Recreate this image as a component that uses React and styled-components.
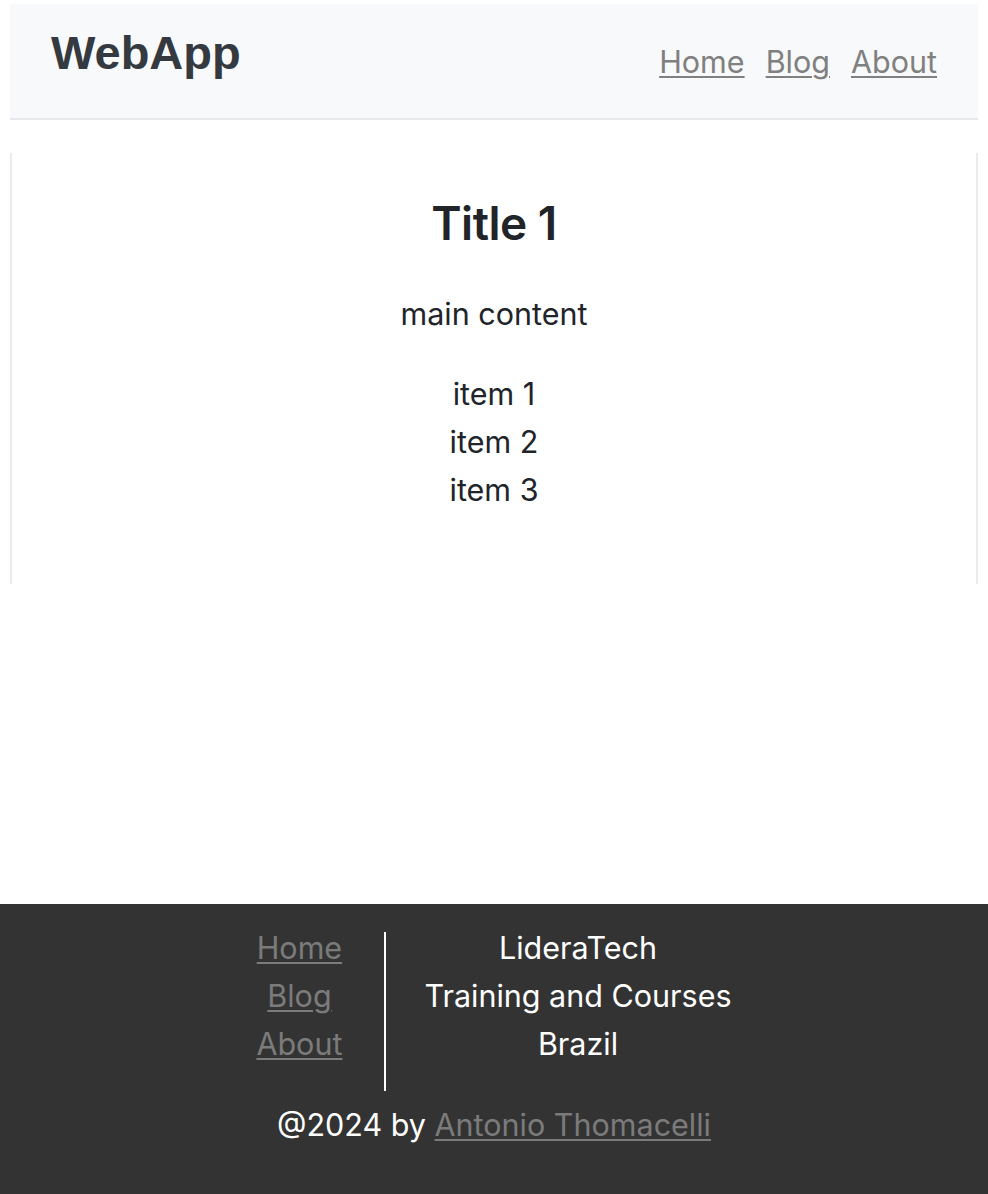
import React from "react";
import styled, { createGlobalStyle } from "styled-components";

const Global = createGlobalStyle`
  html, body { margin: 0; padding: 0; background: #ffffff; }
  body { font-family: Inter, "Noto Sans", sans-serif; color: #212529; }
  * { box-sizing: border-box; }
`;

const Page = styled.div`
  min-height: 100vh;
  display: flex;
  flex-direction: column;
`;

const Header = styled.header`
  margin: 4px 10px 0;
  height: 116px;
  background: #f8f9fa;
  border-bottom: 2px solid #e9e9ed;
  display: flex;
  align-items: flex-start;
  justify-content: space-between;
  padding: 0 41px;
`;

const Logo = styled.div`
  margin-top: 21px;
  font-family: "Liberation Sans", Arial, sans-serif;
  font-weight: 700;
  font-size: 47px;
  line-height: 56px;
  color: #343a40;
`;

const Nav = styled.nav`
  margin-top: 34px;
  display: flex;
  gap: 21px;
`;

const Link = styled.a`
  font-size: 30.5px;
  line-height: 48px;
  color: ${(p) => (p.$dark ? "#7b7b7b" : "#808080")};
  text-decoration: underline;
  text-decoration-thickness: 2px;
  text-underline-offset: 3px;
  cursor: pointer;
`;

const Card = styled.main`
  margin: 33px 10px 0;
  border-left: 2px solid #ebebef;
  border-right: 2px solid #ebebef;
  padding: 41px 0 70px;
  display: flex;
  flex-direction: column;
  align-items: center;
  text-align: center;
`;

const Title = styled.h1`
  margin: 0;
  font-size: 46px;
  line-height: 58px;
  font-weight: 600;
  color: #212529;
  letter-spacing: -0.5px;
`;

const Text = styled.p`
  margin: 38px 0 0;
  font-size: 30.5px;
  line-height: 48px;
`;

const List = styled.ul`
  margin: 32px 0 0;
  padding: 0;
  list-style: none;
`;

const Item = styled.li`
  font-size: 30.5px;
  line-height: 48px;
`;

const Footer = styled.footer`
  margin-top: auto;
  background: #333333;
  color: #ffffff;
  padding: 20px 0 45px;
  display: flex;
  flex-direction: column;
  align-items: center;
`;

const Row = styled.div`
  display: flex;
  align-items: flex-start;
`;

const Column = styled.div`
  display: flex;
  flex-direction: column;
  align-items: center;
  padding: ${(p) => p.$pad};
  font-size: 30.5px;
  line-height: 48px;
`;

const Divider = styled.div`
  width: 2px;
  height: 159px;
  margin-top: 8px;
  background: #ffffff;
`;

const Copy = styled.div`
  margin-top: 10px;
  font-size: 30.5px;
  line-height: 48px;
`;

export default function App() {
  return (
    <>
      <Global />
      <Page>
        <Header>
          <Logo>WebApp</Logo>
          <Nav>
            <Link>Home</Link>
            <Link>Blog</Link>
            <Link>About</Link>
          </Nav>
        </Header>
        <Card>
          <Title>Title 1</Title>
          <Text>main content</Text>
          <List>
            <Item>item 1</Item>
            <Item>item 2</Item>
            <Item>item 3</Item>
          </List>
        </Card>
        <Footer>
          <Row>
            <Column $pad="0 42px 0 40px">
              <Link $dark>Home</Link>
              <Link $dark>Blog</Link>
              <Link $dark>About</Link>
            </Column>
            <Divider />
            <Column $pad="0 40px 0 38px">
              <span>LideraTech</span>
              <span>Training and Courses</span>
              <span>Brazil</span>
            </Column>
          </Row>
          <Copy>
            @2024 by <Link $dark>Antonio Thomacelli</Link>
          </Copy>
        </Footer>
      </Page>
    </>
  );
}
